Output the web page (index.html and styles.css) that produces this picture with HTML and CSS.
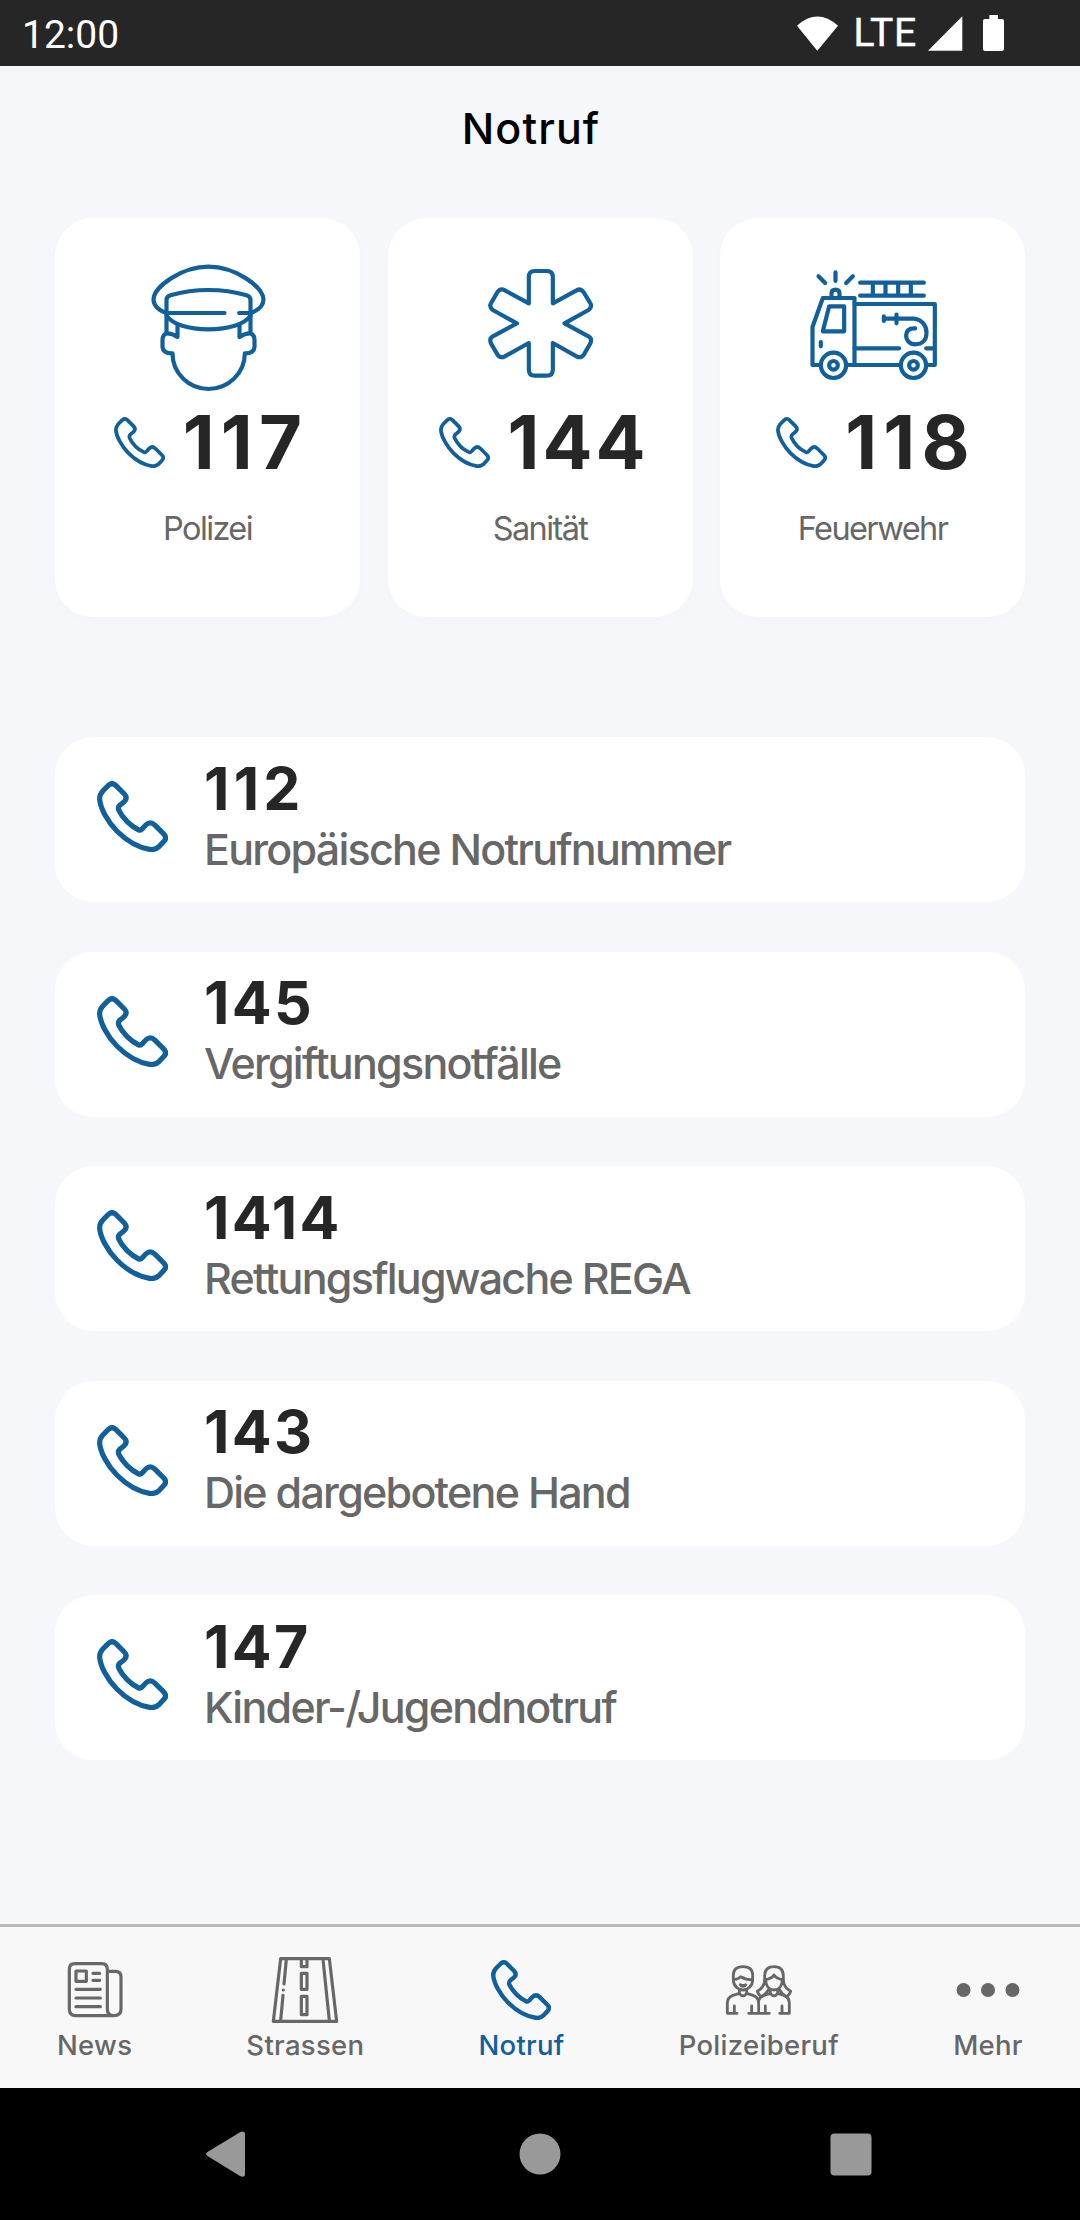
FILE: index.html
```
<!DOCTYPE html>
<html lang="de">
<head>
<meta charset="UTF-8">
<meta name="viewport" content="width=device-width, initial-scale=1.0">
<title>Notruf</title>
<link rel="stylesheet" href="styles.css">
</head>
<body>

<!-- Telefonhörer, mehrfach verwendet -->
<svg class="symbols" width="0" height="0">
  <symbol id="phone" viewBox="52 63 212 212">
    <path stroke-width="15.5" d="M86 76Q97 66 108 76L133 101Q145 113 133 125L123 133Q113 140 117 150C128 174 153 198 176 209Q182 212 188 205L198 194Q211 182 224 194L251 221Q262 232 252 243L238 258Q226 270 209 267C178 262 142 243 112 213C82 183 62 143 60 118Q59 104 70 92Z"/>
  </symbol>
</svg>

<!-- Statusleiste -->
<div class="status">
  <span class="time">12:00</span>
  <svg class="wifi" width="41" height="35" viewBox="42 44 123 105"><path d="M42 73Q103 18 165 73L103 148Z"/></svg>
  <span class="lte">LTE</span>
  <svg class="signal" width="35" height="35" viewBox="443 45 105 105"><path d="M546 46V149H443Z"/></svg>
  <svg class="battery" width="21" height="36" viewBox="606 45 63 108"><path d="M625 45h26v12h12q6 0 6 6v84q0 6-6 6h-51q-6 0-6-6v-84q0-6 6-6h13z"/></svg>
</div>

<main>
  <h1>Notruf</h1>

  <div class="cards">
    <div class="card">
      <svg class="icon" viewBox="292.5 170 420 420">
        <path d="M377 338C350 328 339 314 339 297C341 258 425 199 504 199C583 199 667 258 669 297C669 314 658 328 631 338"/>
        <path d="M378 399V300Q378 288 390 285Q445 269 504 269Q563 269 618 285Q630 288 630 300V399"/>
        <path d="M378 338H552M596 338H630M378 346C395 372 445 387 504 387C563 387 613 372 630 346"/>
        <path d="M411 375V410Q395 399 380 399Q366 402 366 420V440Q368 460 396 459C396 520 446 566 504 566C562 566 613 520 613 459Q640 460 642 440V420Q642 402 628 399Q613 399 597 410V375"/>
      </svg>
      <div class="number wide"><svg><use href="#phone"/></svg>117</div>
      <div class="label">Polizei</div>
    </div>
    <div class="card">
      <svg class="icon" viewBox="268.5 170 420 420">
        <path d="M445 309V230Q445 212 463 212H499Q517 212 517 230V309L588 270Q600 263 609 275L628 306Q637 319 624 329L552 369L624 408Q637 416 628 432L610 463Q601 475 588 468L517 428V508Q517 526 499 526H463Q445 526 445 508V428L373 468Q360 475 351 463L333 432Q324 416 337 408L409 369L337 329Q324 319 333 306L351 275Q360 263 373 270Z"/>
      </svg>
      <div class="number"><svg><use href="#phone"/></svg>144</div>
      <div class="label">Sanität</div>
    </div>
    <div class="card">
      <svg class="icon" viewBox="307.5 170 420 420">
        <path d="M405 216V242M354 228L374 248M457 228L437 248M393 290V280Q393 268 405 268Q417 268 417 280V290"/>
        <path d="M361 494H336V380L367 293H462V494M386 318H431V393H367Z"/>
        <path d="M479 247H670M479 286H670M517 247V286M555 247V286M593 247V286M631 247V286"/>
        <path d="M462 311H703V494H682M438 494H600M462 444H596M677 444H703M361 425V438"/>
        <path d="M550 348V362M588 343V369M550 355H640C665 358 678 376 678 397C678 420 664 432 645 432C628 432 616 420 617 404C618 390 628 383 644 384"/>
        <circle cx="399" cy="495" r="38"/><circle cx="399" cy="495" r="13"/>
        <circle cx="639" cy="495" r="38"/><circle cx="639" cy="495" r="13"/>
      </svg>
      <div class="number wide"><svg><use href="#phone"/></svg>118</div>
      <div class="label">Feuerwehr</div>
    </div>
  </div>

  <div class="list">
    <div class="row">
      <svg><use href="#phone"/></svg>
      <div><strong class="wide">112</strong><span>Europäische Notrufnummer</span></div>
    </div>
    <div class="row">
      <svg><use href="#phone"/></svg>
      <div><strong>145</strong><span>Vergiftungsnotfälle</span></div>
    </div>
    <div class="row">
      <svg><use href="#phone"/></svg>
      <div><strong>1414</strong><span>Rettungsflugwache REGA</span></div>
    </div>
    <div class="row">
      <svg><use href="#phone"/></svg>
      <div><strong>143</strong><span>Die dargebotene Hand</span></div>
    </div>
    <div class="row">
      <svg><use href="#phone"/></svg>
      <div><strong>147</strong><span>Kinder-/Jugendnotruf</span></div>
    </div>
  </div>
</main>

<!-- Tabs -->
<nav class="tabs">
  <div class="tab">
    <svg viewBox="27 45 210 210">
      <path d="M72 71H152Q169 71 169 88V208Q169 227 188 227H74Q55 227 55 208V88Q55 71 72 71ZM169 94H193Q210 94 210 111V208Q210 227 188 227"/>
      <path d="M75 93H106V124H75ZM126 100H146M126 121H146M75 148H148M75 174H148M75 200H148"/>
    </svg>
    News
  </div>
  <div class="tab">
    <svg viewBox="27 45 210 210">
      <path d="M59 56H205L227 244H37ZM76 58L69 132M67 150V150.1M66 166L59 242M186 58L205 242"/>
      <path d="M121 58V80H138V58M121 100H138V148H121ZM121 169H138V224H121Z"/>
    </svg>
    Strassen
  </div>
  <div class="tab active">
    <svg class="small"><use href="#phone"/></svg>
    Notruf
  </div>
  <div class="tab">
    <svg class="people" viewBox="45 45 210 210">
      <path d="M73 106Q73 80 102 80Q131 80 131 106V120C131 138 116 150 102 150C88 150 73 138 73 120ZM75 119Q88 117 95 110Q110 119 130 119M94 134Q102 138 110 134Q108 139 102 139Q96 139 94 134"/>
      <path d="M91 152V160Q102 175 113 160V152M91 160L72 166Q55 172 55 190V220H84M76 198V220M113 160L132 166Q149 172 149 190V220M119 220H181M128 198V220M169 198V220"/>
      <path d="M167 118V108Q167 80 195 80Q223 80 223 108V118M170 118C170 140 182 150 195 150C208 150 220 140 220 118M169 119Q188 116 195 105Q202 116 221 119M167 118Q167 142 145 154Q149 166 158 170Q170 164 178 150M223 118Q223 142 245 154Q241 166 232 170Q220 164 212 150"/>
      <path d="M184 152V160Q195 175 206 160V152M206 160L225 166Q241 172 241 190V220H212M219 198V220M184 160L165 166Q152 171 149 182"/>
    </svg>
    Polizeiberuf
  </div>
  <div class="tab">
    <svg class="dots" viewBox="0 0 70 70"><circle cx="10.5" cy="35" r="7"/><circle cx="35" cy="35" r="7"/><circle cx="59.5" cy="35" r="7"/></svg>
    Mehr
  </div>
</nav>

<!-- Android Navigation -->
<div class="android">
  <svg viewBox="0 0 46 46"><path d="M5.500 21L38 1.200Q43 -1 43 3V43Q43 47 38 45L5.500 25Q2.500 23 5.500 21Z"/></svg>
  <svg viewBox="0 0 46 46"><circle cx="25" cy="23" r="20.500"/></svg>
  <svg viewBox="0 0 46 46"><rect x="2.500" y="2.500" width="41" height="42" rx="4"/></svg>
</div>

</body>
</html>
```
FILE: styles.css
```
* {
  box-sizing: border-box;
}
body {
  margin: 0;
  width: 1080px;
  height: 2220px;
  display: flex;
  flex-direction: column;
  background-color: #f5f7fb;
  color: #262626;
  font-family: 'Inter', 'Liberation Sans', sans-serif;
}
svg {
  display: block;
  flex: none;
  overflow: visible;
  fill: none;
  stroke: #11609b;
  stroke-linecap: round;
  stroke-linejoin: round;
}
.symbols {
  position: absolute;
}

/* Statusleiste */
.status {
  height: 66px;
  padding: 0 76px 0 22px;
  display: flex;
  align-items: center;
  background-color: #262626;
  color: white;
  font-family: 'Roboto', sans-serif;
  font-size: 39px;
}
.status svg {
  fill: white;
  stroke: none;
}
.time {
  margin-right: auto;
  padding-top: 3px;
}
.lte {
  margin: 0 11px 0 15px;
  letter-spacing: 0.8px;
  -webkit-text-stroke: 0.5px white;
}
.battery {
  margin-left: 20px;
}

main {
  flex: 1;
  padding: 0 55px;
}
h1 {
  margin: 0 0 40px;
  padding: 12px 18px 0 0;
  height: 112px;
  line-height: 100px;
  font-size: 43px;
  font-weight: 550;
  letter-spacing: 1.1px;
  text-align: center;
  color: black;
}

/* Hauptnummern */
.cards {
  display: grid;
  grid-template-columns: repeat(3, 305px);
  justify-content: space-between;
}
.card {
  height: 399px;
  padding-top: 38.7px;
  display: flex;
  flex-direction: column;
  align-items: center;
  background-color: white;
  border-radius: 38px;
  box-shadow: 0 4px 20px rgba(0, 0, 0, 0.012);
}
.icon {
  width: 140px;
  height: 140px;
  stroke-width: 12.5;
}
.number {
  height: 90px;
  padding-left: 7px;
  display: flex;
  align-items: center;
  gap: 18px;
  font-size: 74px;
  font-weight: 700;
  letter-spacing: 3px;
}
.number.wide {
  letter-spacing: 6.2px;
}
.number svg {
  width: 51px;
  height: 51px;
  margin-top: 2px;
}
.label {
  margin-top: 22px;
  line-height: 40px;
  font-size: 32.5px;
  letter-spacing: -1.6px;
  color: #676767;
}

/* Weitere Nummern */
.list {
  margin-top: 120px;
  display: flex;
  flex-direction: column;
  gap: 49.5px;
}
.row {
  height: 165px;
  padding-left: 42px;
  display: flex;
  align-items: center;
  gap: 36px;
  background-color: white;
  border-radius: 38px;
}
.row svg {
  width: 71px;
  height: 71px;
  margin-top: -6px;
}
.row strong {
  display: block;
  margin-top: -2px;
  line-height: 60px;
  font-size: 59px;
  font-weight: 700;
  letter-spacing: 2.3px;
}
.row .wide {
  letter-spacing: 4.2px;
}
.row span {
  display: block;
  line-height: 60px;
  font-size: 43px;
  font-weight: 500;
  letter-spacing: -1.75px;
  color: #676767;
}

/* Tabs */
.tabs {
  height: 164px;
  padding: 28px 57px 0;
  display: flex;
  justify-content: space-between;
  border-top: 3px solid #b9bbbb;
  background-color: #f8f8f8;
}
.tab {
  display: flex;
  flex-direction: column;
  align-items: center;
  line-height: 40px;
  font-size: 27.5px;
  font-weight: 500;
  letter-spacing: 0.3px;
  color: #676767;
}
.tab svg {
  width: 70px;
  height: 70px;
  stroke: #676767;
  stroke-width: 9.5;
}
.tab .small {
  width: 60px;
  height: 60px;
  margin: 5px;
}
.tab .people {
  stroke-width: 8.5;
}
.tab .dots {
  fill: #676767;
  stroke: none;
}
.active {
  color: #11609b;
}
.tab.active svg {
  stroke: #11609b;
}

.android {
  height: 132px;
  padding: 0 206px 0 202px;
  display: flex;
  align-items: center;
  justify-content: space-between;
  background-color: black;
}
.android svg {
  width: 46px;
  height: 46px;
  fill: #999;
  stroke: none;
}
```
